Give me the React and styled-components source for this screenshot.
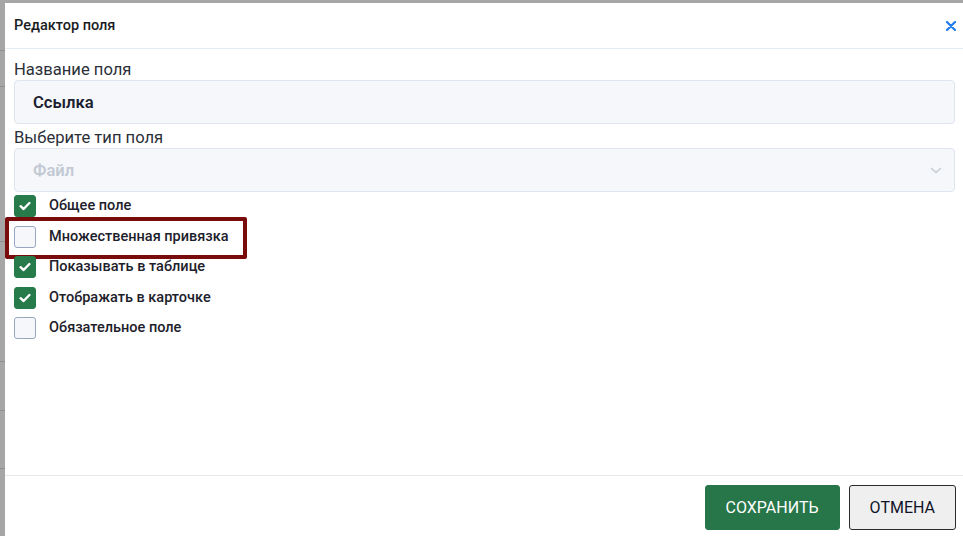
import React, { useState } from "react";
import styled, { createGlobalStyle } from "styled-components";

const GlobalStyle = createGlobalStyle`
  html, body {
    margin: 0;
    padding: 0;
    height: 100%;
    overflow: hidden;
  }
  body {
    font-family: Roboto, "Liberation Sans", Arial, sans-serif;
    background-color: #a6a6a6;
    background-image:
      linear-gradient(#8e8e8e, #8e8e8e),
      linear-gradient(#8e8e8e, #8e8e8e),
      linear-gradient(#8e8e8e, #8e8e8e),
      linear-gradient(#8e8e8e, #8e8e8e),
      linear-gradient(#8e8e8e, #8e8e8e),
      linear-gradient(#8e8e8e, #8e8e8e);
    background-repeat: no-repeat;
    background-size: 5px 1px;
    background-position: 0 50px, 0 86px, 0 241px, 0 361px, 0 410px, 0 468px;
  }
`;

const Overlay = styled.div`
  height: 100vh;
  box-sizing: border-box;
  padding: 3px 0 0 5px;
  display: flex;
`;

const Modal = styled.div`
  flex: 1;
  background: #fff;
  display: flex;
  flex-direction: column;
  color: #1f2430;
`;

const Header = styled.div`
  height: 45px;
  border-bottom: 1px solid #e6ecf5;
  display: flex;
  align-items: center;
  justify-content: space-between;
  padding: 0 7px 0 9px;
`;

const Title = styled.h2`
  margin: 0;
  font-size: 14.5px;
  font-weight: 500;
  color: #1a1d24;
`;

const CloseButton = styled.button`
  border: none;
  background: none;
  padding: 0;
  width: 10px;
  height: 10px;
  display: flex;
  cursor: pointer;
`;

const Body = styled.div`
  flex: 1;
  padding: 11px 8px 0 9px;
  display: flex;
  flex-direction: column;
  gap: 4px;
`;

const Field = styled.div`
  display: flex;
  flex-direction: column;
`;

const Label = styled.label`
  font-size: 16.6px;
  line-height: 20px;
  color: #2b2f38;
`;

const Box = styled.div`
  height: 44px;
  box-sizing: border-box;
  background: #f5f7fb;
  border: 1px solid #dfe5ee;
  border-radius: 4px;
  display: flex;
  align-items: center;
  justify-content: space-between;
  padding: 0 12px 0 18px;
  font-size: 16.6px;
  font-weight: 600;
  color: ${(p) => (p.disabled ? "#c3c9d3" : "#1c2130")};
`;

const Checks = styled.div`
  margin-top: -1px;
  display: flex;
  flex-direction: column;
`;

const CheckRow = styled.label`
  position: relative;
  height: 30.5px;
  display: flex;
  align-items: flex-start;
  gap: 13px;
  font-size: 14.5px;
  font-weight: 500;
  line-height: 22px;
  color: #1d212b;
  cursor: pointer;
`;

const CheckBox = styled.span`
  width: 22px;
  height: 22px;
  box-sizing: border-box;
  border-radius: 3px;
  display: flex;
  align-items: center;
  justify-content: center;
  background: ${(p) => (p.checked ? "#277a4a" : "#f5f7fb")};
  border: 1px solid ${(p) => (p.checked ? "#277a4a" : "#98a6c0")};
`;

const Highlight = styled.span`
  position: absolute;
  left: -9px;
  top: -9px;
  width: 242px;
  height: 42px;
  box-sizing: border-box;
  border: 4px solid #7a0b0b;
  border-radius: 2px;
  pointer-events: none;
`;

const Footer = styled.div`
  border-top: 1px solid #e8e8e8;
  padding: 9px 7px 6px;
  display: flex;
  justify-content: flex-end;
  gap: 9px;
`;

const Button = styled.button`
  height: 45px;
  box-sizing: border-box;
  padding: 0 20px;
  min-width: ${(p) => (p.primary ? "134px" : "107px")};
  border-radius: 3px;
  font-family: Roboto, "Liberation Sans", Arial, sans-serif;
  font-size: 16px;
  text-transform: uppercase;
  cursor: pointer;
  background: ${(p) => (p.primary ? "#277649" : "#efefef")};
  color: ${(p) => (p.primary ? "#fff" : "#101328")};
  border: 1px solid ${(p) => (p.primary ? "#277649" : "#2b2b2b")};
`;

const Check = () => (
  <svg width="12" height="10" viewBox="0 0 12 10">
    <path
      d="M1.6 5.2 L4.6 8 L10.4 2"
      fill="none"
      stroke="#fff"
      strokeWidth="2.4"
      strokeLinecap="round"
      strokeLinejoin="round"
    />
  </svg>
);

const options = [
  { id: "common", text: "Общее поле", checked: true },
  { id: "multi", text: "Множественная привязка", checked: false, marked: true },
  { id: "table", text: "Показывать в таблице", checked: true },
  { id: "card", text: "Отображать в карточке", checked: true },
  { id: "required", text: "Обязательное поле", checked: false },
];

const App = () => {
  const [state, setState] = useState(options);

  const toggle = (id) =>
    setState(state.map((o) => (o.id === id ? { ...o, checked: !o.checked } : o)));

  return (
    <>
      <GlobalStyle />
      <Overlay>
        <Modal>
          <Header>
            <Title>Редактор поля</Title>
            <CloseButton aria-label="close">
              <svg width="10" height="10" viewBox="0 0 10 10">
                <path
                  d="M1 1 L9 9 M9 1 L1 9"
                  stroke="#1f7bf0"
                  strokeWidth="2.2"
                  strokeLinecap="round"
                />
              </svg>
            </CloseButton>
          </Header>
          <Body>
            <Field>
              <Label>Название поля</Label>
              <Box>Ссылка</Box>
            </Field>
            <Field>
              <Label>Выберите тип поля</Label>
              <Box disabled>
                Файл
                <svg width="12" height="7" viewBox="0 0 12 7">
                  <path
                    d="M1 1 L6 5.5 L11 1"
                    fill="none"
                    stroke="#c8cdd6"
                    strokeWidth="1.6"
                  />
                </svg>
              </Box>
            </Field>
            <Checks>
              {state.map((o) => (
                <CheckRow key={o.id} onClick={() => toggle(o.id)}>
                  <CheckBox checked={o.checked}>{o.checked && <Check />}</CheckBox>
                  {o.text}
                  {o.marked && <Highlight />}
                </CheckRow>
              ))}
            </Checks>
          </Body>
          <Footer>
            <Button primary>Сохранить</Button>
            <Button>Отмена</Button>
          </Footer>
        </Modal>
      </Overlay>
    </>
  );
};

export default App;
